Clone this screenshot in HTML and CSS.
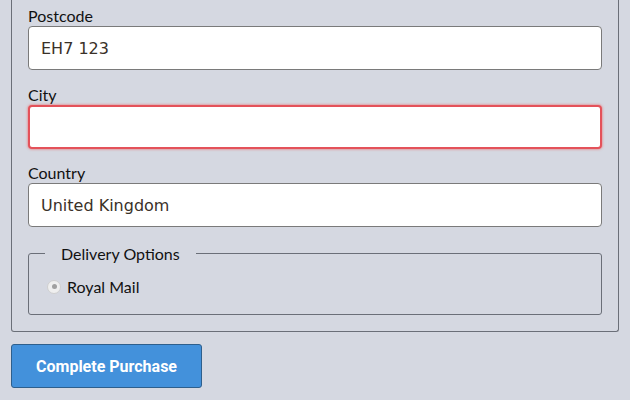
FILE: index.html
```html
<!DOCTYPE html>
<html>
<head>
<meta charset="utf-8">
<link rel="stylesheet" href="styles.css">
</head>
<body>
<form class="form">
  <div class="section">
    <div class="field">
      <label class="label" for="postcode">Postcode</label>
      <input class="input" id="postcode" type="text" value="EH7 123">
    </div>
    <div class="field">
      <label class="label" for="city">City</label>
      <input class="input invalid" id="city" type="text" value="">
    </div>
    <div class="field">
      <label class="label" for="country">Country</label>
      <input class="input" id="country" type="text" value="United Kingdom">
    </div>
    <fieldset class="options">
      <legend class="legend">Delivery Options</legend>
      <label class="radio-row">
        <span class="radio"><span class="radio-dot"></span></span>
        <span class="radio-label">Royal Mail</span>
      </label>
    </fieldset>
  </div>
  <button type="button" class="submit">Complete Purchase</button>
</form>
</body>
</html>
```
FILE: styles.css
```css
html, body {
  margin: 0;
  padding: 0;
  background: #d5d8e1;
}
body {
  font-family: "Lato", "Open Sans", sans-serif;
  font-size: 16px;
  color: #111;
}
.form {
  padding: 0 0 0 11px;
  width: 608px;
}
.section {
  border: 1px solid #6b6f78;
  border-top: none;
  border-radius: 0 0 3px 3px;
  padding: 6px 16px 16px 16px;
}
.field {
  display: flex;
  flex-direction: column;
  margin-bottom: 14.5px;
}
.label {
  line-height: 20px;
  height: 20px;
}
.input {
  box-sizing: border-box;
  height: 44px;
  margin: 0;
  border: 1px solid #7a7a7a;
  border-radius: 4px;
  background: #fff;
  padding: 0 12px;
  font-family: "DejaVu Sans", sans-serif;
  font-size: 16px;
  color: #3a3128;
  outline: none;
}
.invalid {
  border: 2px solid #e4525a;
  box-shadow: 0 0 2px 1px rgba(240, 110, 110, 0.5);
}
.options {
  margin: 17px 0 0 0;
  border: 1px solid #6b6f78;
  border-radius: 3px;
  padding: 14px 18px 18px 18px;
  min-height: 0;
}
.legend {
  padding: 0 16px;
  margin-left: -2px;
}
.radio-row {
  display: flex;
  align-items: center;
  gap: 6px;
}
.radio {
  box-sizing: border-box;
  width: 14px;
  height: 14px;
  border-radius: 50%;
  border: 1px solid #cfcfcf;
  background: #efefef;
  display: flex;
  align-items: center;
  justify-content: center;
}
.radio-dot {
  width: 5px;
  height: 5px;
  border-radius: 50%;
  background: #a0a0a0;
}
.submit {
  margin-top: 12px;
  width: 191px;
  height: 44px;
  background: #4391db;
  border: 1px solid #2e5f8c;
  border-radius: 3px;
  color: #fff;
  font-family: "Roboto", sans-serif;
  font-weight: 700;
  font-size: 16px;
}
```
